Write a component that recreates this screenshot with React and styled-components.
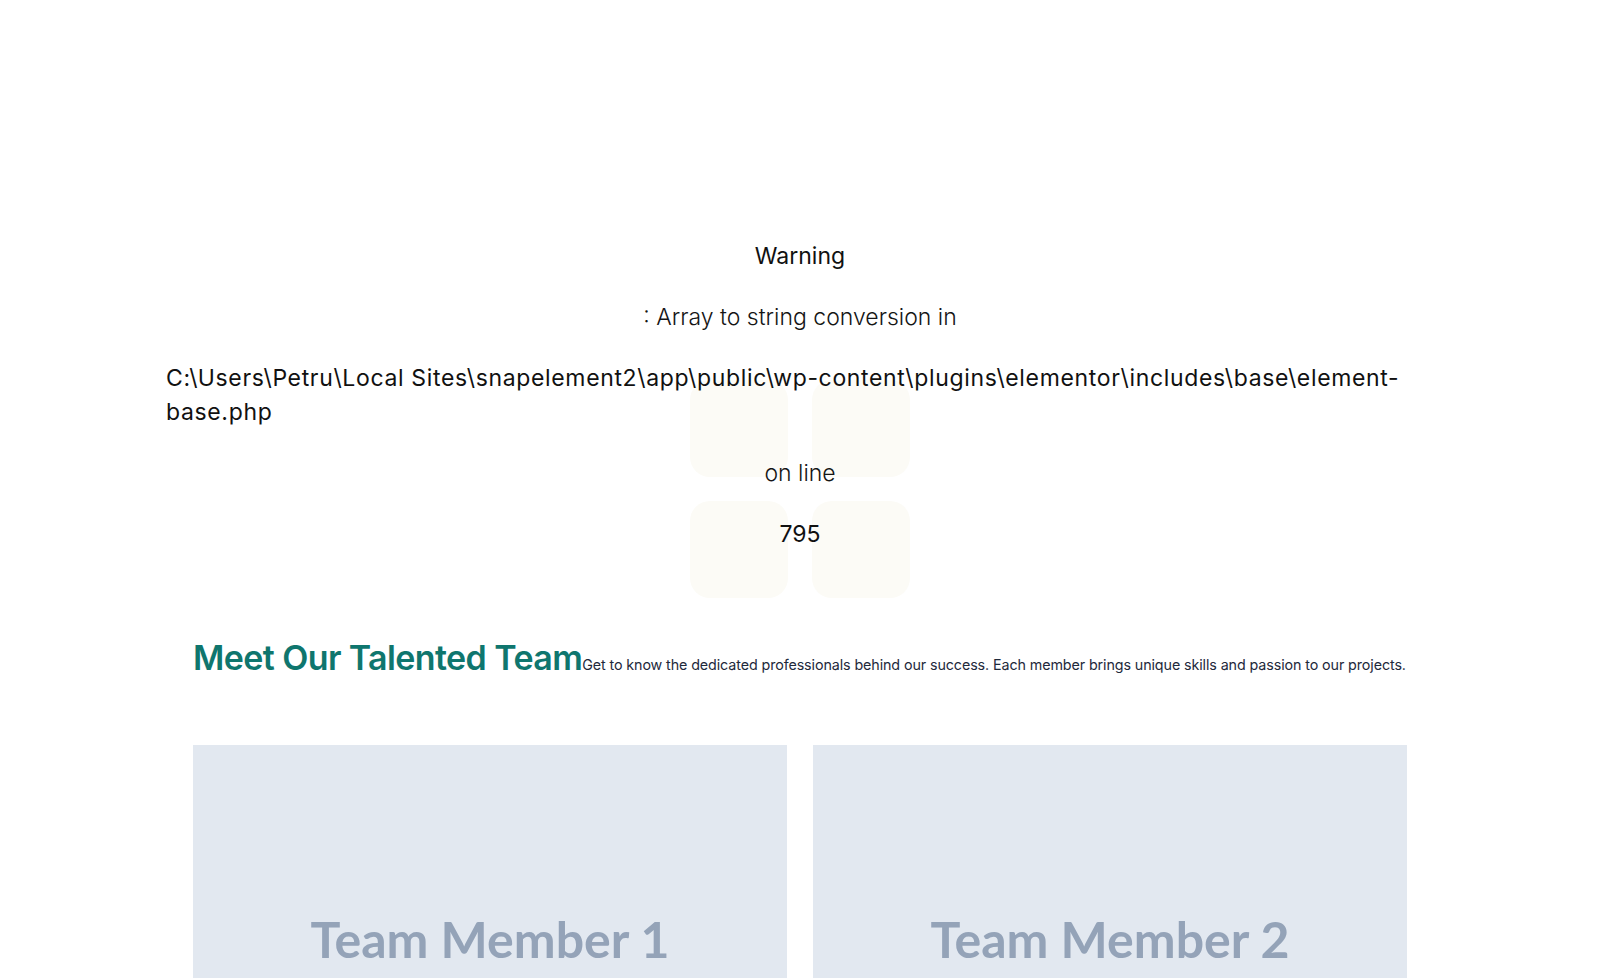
import React from "react";
import styled, { createGlobalStyle } from "styled-components";

const Global = createGlobalStyle`
  html, body { margin: 0; padding: 0; background: #ffffff; }
  body { font-family: Inter, "Open Sans", sans-serif; color: #111111; }
  * { box-sizing: border-box; }
`;

const Page = styled.div`
  width: 100%;
  min-height: 978px;
  overflow: hidden;
  padding-top: 239px;
`;

const WarningSection = styled.section`
  position: relative;
  width: 1268px;
  margin: 0 auto;
`;

const Decor = styled.div`
  position: absolute;
  top: 141px;
  left: 50%;
  transform: translateX(-50%);
  display: grid;
  grid-template-columns: 98px 98px;
  grid-auto-rows: 97px;
  gap: 24px;
  z-index: 0;
`;

const Tile = styled.div`
  background: #fcfbf6;
  border-radius: 20px;
`;

const WarningBox = styled.div`
  position: relative;
  z-index: 1;
  display: flex;
  flex-direction: column;
  align-items: center;
  gap: 27px;
  font-family: Inter, "Open Sans", sans-serif;
  font-size: 23px;
  line-height: 34px;
  font-weight: 300;
  color: #151515;
`;

const Strong = styled.b`
  font-weight: 400;
  color: #111111;
  letter-spacing: ${(p) => (p.$path ? "0.65px" : "0")};
`;

const Plain = styled.span`
  font-weight: 300;
`;

const Container = styled.div`
  width: 1214px;
  margin: 0 auto;
`;

const HeaderRow = styled.div`
  display: flex;
  align-items: baseline;
  margin-top: 86px;
`;

const Title = styled.h2`
  margin: 0;
  font-family: Inter, "Open Sans", sans-serif;
  font-weight: 600;
  font-size: 34px;
  line-height: 42px;
  letter-spacing: -0.6px;
  color: #0f766e;
  white-space: nowrap;
`;

const Lead = styled.p`
  margin: 0;
  font-family: Inter, "Open Sans", sans-serif;
  font-size: 14.3px;
  line-height: 20px;
  color: #1e293b;
  white-space: nowrap;
  letter-spacing: -0.1px;
`;

const Cards = styled.div`
  display: grid;
  grid-template-columns: 1fr 1fr;
  gap: 26px;
  margin-top: 66px;
`;

const Card = styled.div`
  aspect-ratio: 594 / 388;
  background: #e2e8f0;
  display: flex;
  align-items: center;
  justify-content: center;
`;

const CardLabel = styled.span`
  font-family: Lato, "Open Sans", sans-serif;
  font-weight: 700;
  font-size: 50px;
  color: #94a3b8;
`;

const members = ["Team Member 1", "Team Member 2"];

export default function App() {
  return (
    <>
      <Global />
      <Page>
        <WarningSection>
          <Decor>
            <Tile />
            <Tile />
            <Tile />
            <Tile />
          </Decor>
          <WarningBox>
            <Strong>Warning</Strong>
            <Plain>: Array to string conversion in</Plain>
            <Strong $path>
              C:\Users\Petru\Local Sites\snapelement2\app\public\wp-content\plugins\elementor\includes\base\element-base.php
            </Strong>
            <Plain>on line</Plain>
            <Strong>795</Strong>
          </WarningBox>
        </WarningSection>
        <Container>
          <HeaderRow>
            <Title>Meet Our Talented Team</Title>
            <Lead>
              Get to know the dedicated professionals behind our success. Each member brings unique skills and passion to our projects.
            </Lead>
          </HeaderRow>
          <Cards>
            {members.map((m) => (
              <Card key={m}>
                <CardLabel>{m}</CardLabel>
              </Card>
            ))}
          </Cards>
        </Container>
      </Page>
    </>
  );
}
